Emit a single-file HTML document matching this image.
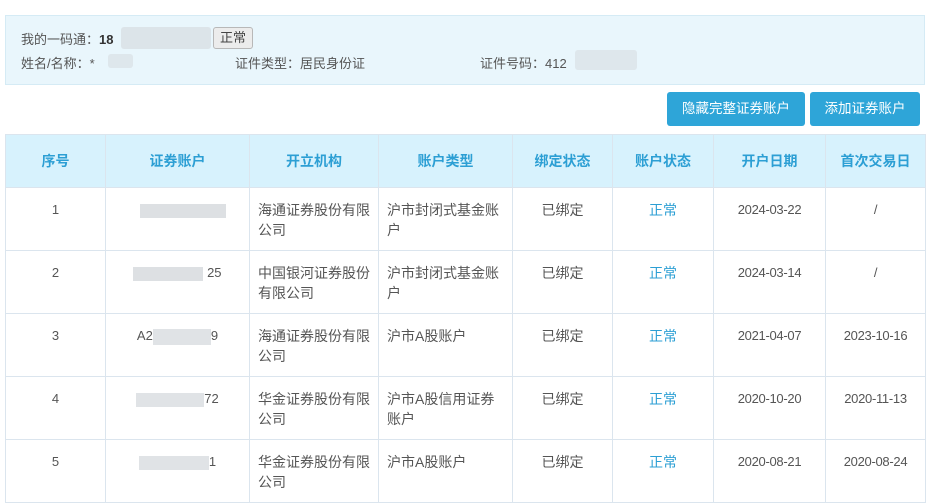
<!DOCTYPE html>
<html><head><meta charset="utf-8"><style>
*{margin:0;padding:0;box-sizing:border-box}
body{width:936px;height:501px;overflow:hidden;background:#fff;font-family:"Liberation Sans","Noto Sans CJK SC",sans-serif;font-size:13px;color:#555;position:relative}
.info{position:absolute;left:5px;top:15px;width:920px;height:70px;background:#e9f6fc;border:1px solid #d5ebf5}
.t{position:absolute;white-space:nowrap}
.tag{position:absolute;left:213px;top:27px;width:40px;height:22px;border:1px solid #b8b8b8;border-radius:3px;background:#ececec;text-align:center;line-height:20px;color:#444}
.blur{position:absolute;background:#d3d8dc;border-radius:3px;opacity:.85}
.btn{position:absolute;top:92px;height:34px;background:#2ea5d8;color:#fff;border-radius:3px;text-align:center;line-height:34px;font-size:13.5px}
table{position:absolute;left:5px;top:134px;border-collapse:collapse;table-layout:fixed;width:920px;font-size:14px}
td,th{border:1px solid #dbe5ee;vertical-align:top;line-height:20px}
th{height:53px;background:#d7f2fd;color:#2c9fd4;font-weight:bold;vertical-align:middle;font-size:14px}
td{height:63px;padding-top:12px;text-align:center}
td.l{text-align:left;padding-left:8px;padding-right:6px}
.ok{color:#2c9fd4}
.n{font-size:13px}
.d{font-size:13px;letter-spacing:-0.3px}
</style></head><body>
<div class="info"></div>
<div class="t" style="left:21px;top:29px">我的一码通：<b style="color:#333">18</b></div>
<div class="blur" style="left:121px;top:27px;width:90px;height:22px;opacity:.6"></div>
<div class="tag">正常</div>
<div class="t" style="left:21px;top:53px">姓名/名称：*</div>
<div class="blur" style="left:108px;top:54px;width:25px;height:14px;opacity:.5"></div>
<div class="t" style="left:235px;top:53px">证件类型：居民身份证</div>
<div class="t" style="left:480px;top:53px">证件号码：412</div>
<div class="blur" style="left:575px;top:50px;width:62px;height:20px;opacity:.5"></div>
<div class="btn" style="left:667px;width:138px">隐藏完整证券账户</div>
<div class="btn" style="left:810px;width:110px">添加证券账户</div>
<table>
<colgroup><col style="width:100px"><col style="width:144px"><col style="width:129px"><col style="width:134px"><col style="width:100px"><col style="width:101px"><col style="width:112px"><col style="width:100px"></colgroup>
<tr><th>序号</th><th>证券账户</th><th>开立机构</th><th>账户类型</th><th>绑定状态</th><th>账户状态</th><th>开户日期</th><th>首次交易日</th></tr>
<tr><td class="n">1</td><td><span style="display:inline-block;width:86px;height:14px;background:#dde0e3;margin-left:10px;vertical-align:middle"></span></td><td class="l">海通证券股份有限公司</td><td class="l">沪市封闭式基金账户</td><td>已绑定</td><td class="ok">正常</td><td class="d">2024-03-22</td><td class="d">/</td></tr>
<tr><td class="n">2</td><td class="n"><span style="display:inline-block;width:70px;height:14px;background:#dde0e3;vertical-align:middle"></span> 25</td><td class="l">中国银河证券股份有限公司</td><td class="l">沪市封闭式基金账户</td><td>已绑定</td><td class="ok">正常</td><td class="d">2024-03-14</td><td class="d">/</td></tr>
<tr><td class="n">3</td><td class="n">A2<span style="display:inline-block;width:58px;height:16px;background:#e0e3e6;vertical-align:middle"></span>9</td><td class="l">海通证券股份有限公司</td><td class="l">沪市A股账户</td><td>已绑定</td><td class="ok">正常</td><td class="d">2021-04-07</td><td class="d">2023-10-16</td></tr>
<tr><td class="n">4</td><td class="n"><span style="display:inline-block;width:68px;height:14px;background:#e0e3e6;vertical-align:middle"></span>72</td><td class="l">华金证券股份有限公司</td><td class="l">沪市A股信用证券账户</td><td>已绑定</td><td class="ok">正常</td><td class="d">2020-10-20</td><td class="d">2020-11-13</td></tr>
<tr><td class="n">5</td><td class="n"><span style="display:inline-block;width:70px;height:14px;background:#e0e3e6;vertical-align:middle"></span>1</td><td class="l">华金证券股份有限公司</td><td class="l">沪市A股账户</td><td>已绑定</td><td class="ok">正常</td><td class="d">2020-08-21</td><td class="d">2020-08-24</td></tr>
</table>
</body></html>
